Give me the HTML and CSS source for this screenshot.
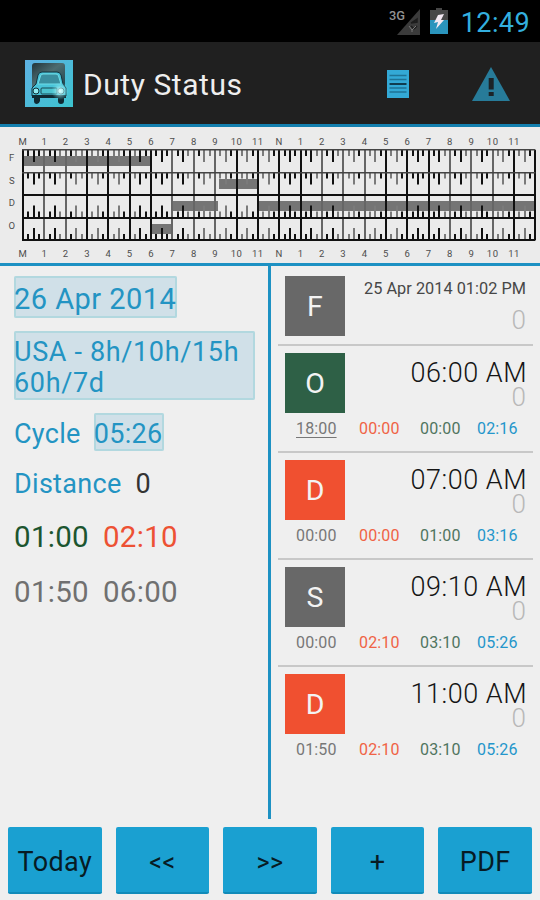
FILE: index.html
```html
<!DOCTYPE html>
<html lang="en">
<head>
<meta charset="utf-8">
<title>Duty Status</title>
<link rel="stylesheet" href="styles.css">
</head>
<body>
<header class="status">
  <svg class="signal" width="32" height="29" viewBox="0 0 32 29">
    <path d="M31 1V27H8Z" fill="#3b3b3b"/>
    <path d="M28 11l-6 4 6-1zM22 18l3 3M28 18l-3 3" stroke="#1c1c1c" stroke-width="1.5" fill="#222"/>
    <path d="M20 18l3 4v2M27 18l-4 4" stroke="#777" fill="none"/>
    <text x="0" y="11.5" class="net" textLength="16" lengthAdjust="spacingAndGlyphs">3G</text>
  </svg>
  <svg class="battery" width="18" height="27" viewBox="0 0 18 27">
    <path d="M0 2H6V0H12V2H18V13H0Z" fill="#474747"/>
    <path d="M0 12H18V26H0Z" fill="#2a94bd"/>
    <path d="M8 7L14 6L11 12L14 12L6 21L8 14L4 15Z" fill="#f4e9f3"/>
  </svg>
  <span class="clock">12:49</span>
</header>
<div class="bar">
  <svg class="logo" width="54" height="54" viewBox="0 0 54 54">
    <defs>
      <linearGradient id="sky" x1="0" y1="0" x2="1" y2="1"><stop offset="0" stop-color="#5eb0e2"/><stop offset="1" stop-color="#3cc4cf"/></linearGradient>
      <linearGradient id="box" x1="0" y1="0" x2="1" y2="1"><stop offset="0" stop-color="#22343a"/><stop offset=".45" stop-color="#4d6c70"/><stop offset="1" stop-color="#1d424c"/></linearGradient>
      <radialGradient id="shine"><stop offset="0" stop-color="#e4ffff"/><stop offset="1" stop-color="#61dce4" stop-opacity="0"/></radialGradient>
    </defs>
    <rect x="3" y="3" width="48" height="47" fill="url(#sky)"/>
    <path d="M10 32V9q0-3 3-3h27q3 0 3 3v23z" fill="url(#box)"/>
    <path d="M14 27L16 18q1-3 4-3h15q3 0 4 3l2 9 3 4v8H10v-8z" fill="#49c3d8" stroke="#12323d"/>
    <path d="M16 27L18.500 19q.5-2 2.500-2h13q2 0 2.500 2l2.500 8z" fill="#3a8e9f" stroke="#6edde8"/>
    <path d="M10 38h34v3H10zM12 40h6v4q-1 3-3 3-3 0-3-3zM36 40h6v4q0 3-3 3-3 0-3-3z" fill="#0f2a33"/>
    <rect x="19" y="31" width="16" height="6" rx="1" fill="#4cc3cf" stroke="#174753"/>
    <circle cx="14" cy="34" r="3" fill="#8feaf0" stroke="#102e37"/>
    <circle cx="39" cy="34" r="3" fill="#8feaf0" stroke="#102e37"/>
    <circle cx="38" cy="34" r="9" fill="url(#shine)"/>
  </svg>
  <h1>Duty Status</h1>
  <svg class="doc" width="24" height="30" viewBox="0 0 24 30">
    <rect x="1" y="1" width="22" height="28" fill="#33a9d6"/>
    <path d="M3.500 6.500h17M3.500 10.500h17M3.500 19h17M3.500 23h17" stroke="#1e7396" stroke-width="1.500"/>
    <path d="M3.500 15h17" stroke="#103c50" stroke-width="2"/>
  </svg>
  <svg class="warn" width="40" height="36" viewBox="0 0 40 36">
    <path d="M20 1L39 35H1Z" fill="#277b99"/>
    <path d="M17.700 12h5v11.500h-5zM17.700 26h5v4h-5z" fill="#1c2327"/>
  </svg>
</div>
<section class="chart"><svg id="graph" width="540" height="136" viewBox="0 127 540 136"></svg></section>
<main>
  <section class="summary">
    <div class="date"><span class="field">26 Apr 2014</span></div>
    <div class="field rule">USA - 8h/10h/15h<br>60h/7d</div>
    <div class="row cycle">Cycle <span class="field">05:26</span></div>
    <div class="row dist">Distance <span class="num">0</span></div>
    <div class="row totals"><span class="green">01:00</span><span class="red">02:10</span></div>
    <div class="row totals gray"><span>01:50</span><span>06:00</span></div>
  </section>
  <section class="log">
    <article class="first"><div class="tile gray-bg">F</div><div class="when"><small>25 Apr 2014 01:02 PM</small><i>0</i></div></article>
    <article><div class="tile green-bg">O</div><div class="when"><b>06:00 AM</b><i>0</i></div>
      <div class="times"><span class="underlined">18:00</span><span>00:00</span><span>00:00</span><span>02:16</span></div></article>
    <article><div class="tile red-bg">D</div><div class="when"><b>07:00 AM</b><i>0</i></div>
      <div class="times"><span>00:00</span><span>00:00</span><span>01:00</span><span>03:16</span></div></article>
    <article><div class="tile gray-bg">S</div><div class="when"><b>09:10 AM</b><i>0</i></div>
      <div class="times"><span>00:00</span><span>02:10</span><span>03:10</span><span>05:26</span></div></article>
    <article><div class="tile red-bg">D</div><div class="when"><b>11:00 AM</b><i>0</i></div>
      <div class="times"><span>01:50</span><span>02:10</span><span>03:10</span><span>05:26</span></div></article>
  </section>
</main>
<footer><button>Today</button><button class="arrows">&lt;&lt;</button><button class="arrows">&gt;&gt;</button><button>+</button><button>PDF</button></footer>
<script src="chart.js"></script>
</body>
</html>
```
FILE: styles.css
```css
* { box-sizing: border-box; }
body { margin: 0; width: 540px; height: 900px; overflow: hidden; display: flex; flex-direction: column; background: #efefef; font-family: Roboto, "Liberation Sans", sans-serif; color: #222; }
.status { height: 42px; background: #000; display: flex; align-items: flex-start; justify-content: flex-end; padding-right: 10px; }
.signal { margin-top: 8px; }
.net { font-size: 13.5px; fill: #929292; font-weight: 500; }
.battery { margin: 8px 13px 0 9px; }
.clock { color: #33afdf; font-size: 27px; line-height: 32px; margin-top: 7px; letter-spacing: .4px; }
.bar { height: 85px; background: #202020; border-bottom: 3px solid #137fae; display: flex; align-items: center; padding: 2px 0 0 22px; }
h1 { margin: 0 0 0 7px; font-size: 30px; font-weight: 400; letter-spacing: .55px; color: #eee; width: 303px; }
.doc { margin-right: 61px; }
.chart { height: 139px; border-bottom: 3px solid #1d91c3; background: #ebebeb; }
.chart svg { display: block; }
.tick-label { font-size: 9.5px; fill: #4d4d4d; text-anchor: middle; letter-spacing: .5px; }
main { height: 553px; display: flex; }
.summary { width: 271px; border-right: 3px solid #1d91c3; padding: 10px 13px 0 14px; color: #2394c3; font-size: 27px; }
.field { background: #d0e0e8; box-shadow: inset 0 0 0 2px #b2d8df; border-radius: 2px; display: inline-block; }
.date { height: 55px; font-size: 29px; letter-spacing: .45px; }
.date .field { height: 42px; line-height: 46px; width: 163px; white-space: nowrap; }
.rule { display: block; width: 241px; height: 69px; line-height: 31px; padding-top: 6px; letter-spacing: .65px; white-space: nowrap; }
.row { display: flex; letter-spacing: .3px; }
.cycle { margin-top: 13px; height: 38px; line-height: 42px; gap: 13px; }
.cycle .field { width: 70px; }
.dist { margin-top: 13px; height: 40px; line-height: 40px; gap: 14px; }
.num { color: #333; }
.totals { margin-top: 12px; height: 43px; line-height: 43px; font-size: 29.5px; gap: 14px; letter-spacing: .3px; }
.green { color: #1c5530; }
.red { color: #ed5134; }
.gray { color: #707070; }
.log { width: 262px; padding: 2px 0 0 7px; }
article { display: grid; grid-template-columns: 60px 1fr; grid-template-rows: 60px 1fr; padding: 7px 0 0 7px; width: 255px; height: 107px; border-bottom: 2px solid #c8c8c8; }
article.first { padding-top: 8px; height: 78px; }
article:last-child { border: 0; }
.tile { width: 60px; height: 60px; color: #f3f3f3; font-size: 28.5px; line-height: 62px; text-align: center; }
.gray-bg { background: #686868; }
.green-bg { background: #2e6046; }
.red-bg { background: #f05030; }
.when { display: flex; flex-direction: column; align-items: flex-end; padding-right: 6px; white-space: nowrap; }
.when b { font-weight: 300; font-size: 27px; line-height: 28px; margin-top: 6px; letter-spacing: .5px; color: #151515; }
.when i { font-style: normal; font-weight: 300; font-size: 26px; line-height: 20px; color: #b8b8b8; padding-right: 1px; }
.when small { font-size: 16.3px; line-height: 26px; color: #474747; letter-spacing: .03px; padding-right: 1px; }
.first i { margin-top: 8px; }
.times { grid-column: 1 / 3; display: grid; grid-template-columns: 63px 61px 57px 41px; padding-left: 11px; font-size: 16px; line-height: 32px; letter-spacing: .15px; color: #777; }
.times span:nth-child(2) { color: #f06345; }
.times span:nth-child(3) { color: #50755f; }
.times span:nth-child(4) { color: #2496cb; }
.underlined { text-decoration: underline; text-underline-offset: 3px; text-decoration-thickness: 1px; }
footer { display: flex; gap: 14px; padding: 8px 8px 0; }
button { flex: 1 1 0; width: 0; height: 67px; border: 0; border-bottom: 2px solid #118bb9; border-radius: 2px; background: #1aa0d1; font: 400 27px/67px Roboto, sans-serif; color: #071b24; padding: 2px 0 0; text-align: center; letter-spacing: .4px; }
.arrows { font-size: 25px; }
```
FILE: chart.js
```js
const svg = document.getElementById('graph');
const left = 23, hour = 21.35;
const rows = [150, 172.5, 195, 217.5, 240];
const right = left + 24 * hour;
let out = '';
const rect = (x, y, w, h, fill) => { out += `<rect x="${x}" y="${y}" width="${w}" height="${h}" fill="${fill}"/>`; };
const label = (x, y, text) => { out += `<text class="tick-label" x="${x}" y="${y}">${text}</text>`; };

// Duty periods: start x, top y, width
[[23, 156, 128], [219, 179, 39], [173, 201, 45], [258, 201, 278], [152, 224, 21]]
  .forEach(([x, y, w]) => rect(x, y, w, 10, '#757575'));

const lightHours = [1, 2, 7, 8, 9, 14, 15, 16, 20, 21, 22];
const lightHalves = [2, 3, 4, 8, 9, 10, 11, 15, 16, 17, 22, 23];
for (let h = 0; h < 24; h++) {
  const x = left + h * hour;
  for (let r = 0; r < 4; r++) {
    [.25, .5, .75].forEach(q => {
      const light = q === .5 ? lightHalves.includes(h) : q === .25 ? h % 6 > 2 : [1, 2].includes(h % 6);
      const len = q === .5 ? 12 : 6;
      rect(Math.round(x + q * hour - 1), r < 2 ? rows[r] : rows[r + 1] - len, 2, len, light ? '#7b7b7b' : '#111');
    });
  }
}
for (let h = 0; h <= 24; h++) {
  rect(Math.round(left + h * hour - 1), 150, 2, 90, lightHours.includes(h) ? '#666' : '#111');
}
rows.forEach((y, i) => rect(22, Math.round(y - 1), right - 22, i < 2 ? 1.5 : 2, i < 2 ? '#444' : '#111'));
for (let h = 0; h < 24; h++) {
  const text = h === 0 ? 'M' : h === 12 ? 'N' : h % 12;
  label(left + h * hour, 144.5, text);
  label(left + h * hour, 257, text);
}
['F', 'S', 'D', 'O'].forEach((t, i) => label(12, 161 + i * 22.7, t));
svg.innerHTML = out;
```
